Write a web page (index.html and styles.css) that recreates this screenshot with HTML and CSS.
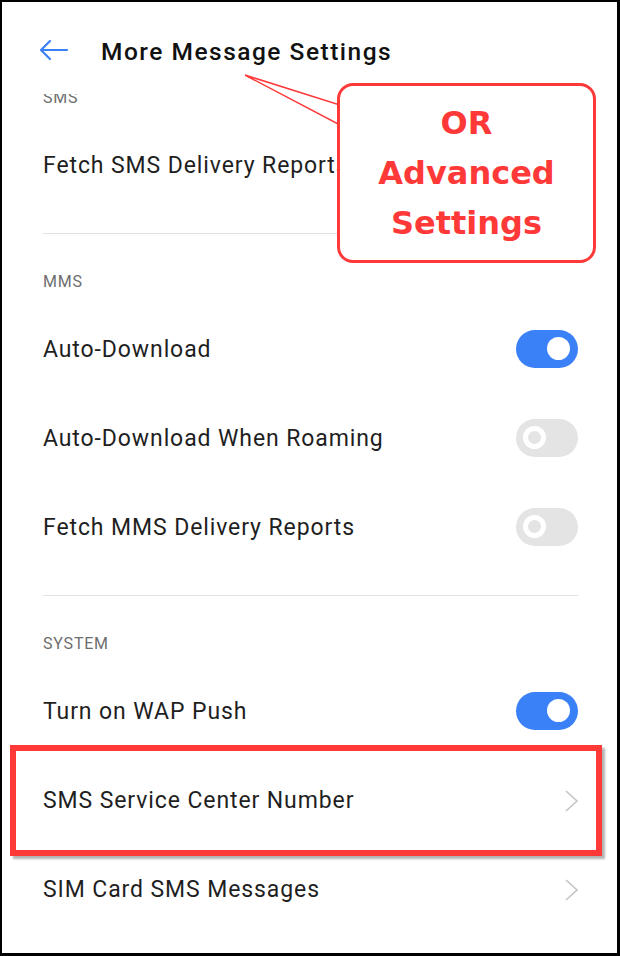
FILE: index.html
```html
<!DOCTYPE html>
<html>
<head>
<meta charset="utf-8">
<link rel="stylesheet" href="styles.css">
</head>
<body>
<div class="frame">
  <header class="header">
    <svg class="back" width="30" height="22" viewBox="0 0 30 22"><path d="M28 11H3M11 2L2 11l9 9" fill="none" stroke="#3b80f5" stroke-width="2.2" stroke-linecap="round" stroke-linejoin="round"/></svg>
    <h1 class="title">More Message Settings</h1>
  </header>
  <main class="scroll">
    <div class="content">
      <div class="label">SMS</div>
      <div class="row"><span class="text">Fetch SMS Delivery Reports</span></div>
      <div class="divider"></div>
      <div class="label">MMS</div>
      <div class="row"><span class="text">Auto-Download</span><span class="toggle on"></span></div>
      <div class="row"><span class="text">Auto-Download When Roaming</span><span class="toggle off"></span></div>
      <div class="row"><span class="text">Fetch MMS Delivery Reports</span><span class="toggle off"></span></div>
      <div class="divider"></div>
      <div class="label">SYSTEM</div>
      <div class="row"><span class="text">Turn on WAP Push</span><span class="toggle on"></span></div>
      <div class="row"><span class="text">SMS Service Center Number</span><svg class="chev" width="15" height="24" viewBox="0 0 15 24"><path d="M2 2l11 10L2 22" fill="none" stroke="#c4c4c4" stroke-width="1.6"/></svg></div>
      <div class="row"><span class="text">SIM Card SMS Messages</span><svg class="chev" width="15" height="24" viewBox="0 0 15 24"><path d="M2 2l11 10L2 22" fill="none" stroke="#c4c4c4" stroke-width="1.6"/></svg></div>
    </div>
  </main>
  <svg class="pointer" width="620" height="140" viewBox="0 0 620 140"><polygon points="243,73 338,103 338,123" fill="#fff" stroke="#ff3838" stroke-width="1.5" stroke-linejoin="miter"/></svg>
  <div class="callout">
    <span>OR</span>
    <span>Advanced</span>
    <span>Settings</span>
  </div>
  <div class="highlight"></div>
</div>
</body>
</html>
```
FILE: styles.css
```css
html, body {
  margin: 0;
  padding: 0;
  background: #fff;
}
.frame {
  position: relative;
  box-sizing: border-box;
  width: 620px;
  height: 956px;
  border-style: solid;
  border-color: #000;
  border-width: 2px 3px 3px 2px;
  background: #fff;
  display: flex;
  flex-direction: column;
  overflow: hidden;
  font-family: Roboto, "Noto Sans", sans-serif;
  color: #1f1f1f;
}
.header {
  height: 86px;
  padding-top: 6px;
  display: flex;
  align-items: center;
  flex: none;
}
.back {
  margin-left: 37px;
  margin-top: -2px;
}
.title {
  margin: 0 0 0 32px;
  font-size: 24.5px;
  font-weight: 500;
  color: #111;
  letter-spacing: 1.5px;
}
.scroll {
  flex: 1;
  overflow: hidden;
}
.content {
  margin-top: -20px;
  padding: 0 39px 0 41px;
}
.label {
  height: 47px;
  display: flex;
  align-items: center;
  font-size: 16px;
  letter-spacing: 0.8px;
  color: #6e6e6e;
}
.row {
  height: 89px;
  display: flex;
  align-items: center;
  justify-content: space-between;
}
.text {
  font-size: 23px;
  letter-spacing: 0.9px;
  color: #1f1f1f;
}
.divider {
  height: 1px;
  background: #e2e2e2;
  margin: 23px 0 24px;
}
.toggle {
  position: relative;
  width: 62px;
  height: 38px;
  border-radius: 19px;
  flex: none;
  margin-top: -2px;
}
.toggle.on {
  background: #3a80f6;
}
.toggle.on::after {
  content: "";
  position: absolute;
  right: 8px;
  top: 7.5px;
  width: 23px;
  height: 23px;
  border-radius: 50%;
  background: #fff;
}
.toggle.off {
  background: #e4e4e4;
}
.toggle.off::after {
  content: "";
  position: absolute;
  left: 7px;
  top: 7.5px;
  width: 13px;
  height: 13px;
  border-radius: 50%;
  background: #e4e4e4;
  border: 5px solid #fff;
}
.chev {
  flex: none;
  margin-right: -1px;
}
.pointer {
  position: absolute;
  left: 0;
  top: 0;
}
.callout {
  position: absolute;
  left: 335px;
  top: 81px;
  box-sizing: border-box;
  width: 259px;
  height: 180px;
  border: 3px solid #ff3838;
  border-radius: 16px;
  background: #fff;
  display: flex;
  flex-direction: column;
  align-items: center;
  justify-content: center;
  font-family: "DejaVu Sans", Verdana, sans-serif;
  font-weight: bold;
  font-size: 32px;
  line-height: 50px;
  color: #ff3838;
}
.highlight {
  position: absolute;
  left: 8px;
  top: 743px;
  box-sizing: border-box;
  width: 592px;
  height: 111px;
  border: 6px solid #ff3838;
  box-shadow: 3px 3px 2px rgba(0, 0, 0, 0.3);
}
```
